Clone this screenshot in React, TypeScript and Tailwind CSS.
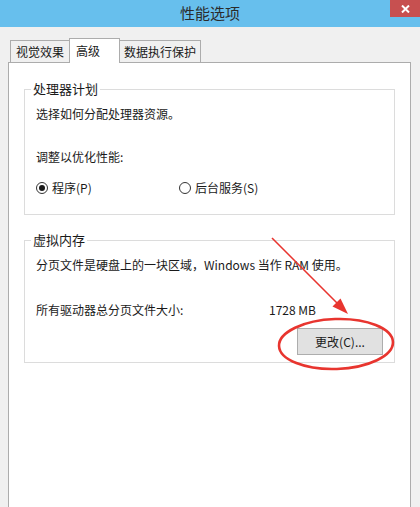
const font = "font-['Microsoft_YaHei','Noto_Sans_CJK_SC',sans-serif]";

function Radio({ checked, label, className }: { checked?: boolean; label: string; className?: string }) {
  return (
    <label className={`flex items-center gap-[4px] ${className ?? ""}`}>
      <span className="w-[12px] h-[12px] rounded-full border border-[#333] bg-white flex items-center justify-center">
        {checked && <span className="w-[6px] h-[6px] rounded-full bg-[#1a1a1a]" />}
      </span>
      <span>{label}</span>
    </label>
  );
}

function GroupBox({ title, children, className }: { title: string; children: React.ReactNode; className?: string }) {
  return (
    <fieldset className={`border border-[#dcdcdc] px-[11px] ${className ?? ""}`}>
      <legend className="-ml-[5px] px-[2px] text-[13px] leading-[16px]">{title}</legend>
      {children}
    </fieldset>
  );
}

export default function App() {
  const tabs = ["视觉效果", "高级", "数据执行保护"];

  return (
    <div className={`relative w-[420px] h-[507px] overflow-hidden bg-[#f0f0f0] text-[#1a1a1a] ${font}`}>
      {/* title bar */}
      <div className="grid grid-cols-[30px_1fr_30px] h-[27px] bg-[#67bfed]">
        <div />
        <div className="flex items-center justify-center text-[15px] text-[#2b2b2b]">性能选项</div>
        <div className="h-[17px] bg-[#c75050] flex items-center justify-center">
          <svg width="9" height="8" viewBox="0 0 9 8">
            <path d="M1 0.5 L8 7.5 M8 0.5 L1 7.5" stroke="#fff" strokeWidth="2" />
          </svg>
        </div>
      </div>

      <div className="pt-[10px] pl-[8px] pr-[9px]">
        {/* tabs */}
        <div className="flex items-end pl-[2px] text-[12px] h-[25px]">
          <div className="h-[22px] px-[5px] border border-b-0 border-[#acacac] bg-[#f0f0f0] flex items-center">{tabs[0]}</div>
          <div className="h-[25px] w-[51px] px-[6px] border border-b-0 border-[#acacac] bg-white -ml-px -mb-px relative z-10 flex items-start pt-[3px]">
            {tabs[1]}
          </div>
          <div className="h-[22px] px-[4px] border border-b-0 border-l-0 border-[#acacac] bg-[#f0f0f0] flex items-center">{tabs[2]}</div>
        </div>

        {/* panel */}
        <div className="h-[460px] border border-[#acacac] bg-white px-[15px] pt-[18px] text-[12px]">
          <GroupBox title="处理器计划" className="h-[134px]">
            <p className="mt-[9px] leading-[16px]">选择如何分配处理器资源。</p>
            <p className="mt-[27px] leading-[16px]">调整以优化性能:</p>
            <div className="mt-[15px] flex leading-[16px]">
              <Radio checked label="程序(P)" className="w-[143px]" />
              <Radio label="后台服务(S)" />
            </div>
          </GroupBox>

          <GroupBox title="虚拟内存" className="mt-[17px] h-[131px]">
            <p className="mt-[9px] leading-[16px]">分页文件是硬盘上的一块区域，Windows 当作 RAM 使用。</p>
            <div className="mt-[29px] flex leading-[16px]">
              <span className="w-[233px]">所有驱动器总分页文件大小:</span>
              <span>1728 MB</span>
            </div>
            <div className="flex justify-end mt-[10px]">
              <button className="w-[86px] h-[27px] border border-[#adadad] bg-[#e1e1e1] text-[12px]">更改(C)...</button>
            </div>
          </GroupBox>
        </div>
      </div>

      {/* red annotation drawn on top */}
      <svg className="absolute inset-0 pointer-events-none" width="420" height="507" viewBox="0 0 420 507">
        <line x1="272" y1="238" x2="339" y2="305" stroke="#e8352f" strokeWidth="1.6" />
        <polygon points="348,314 332.5,306.5 340.5,298.5" fill="#e8352f" />
        <ellipse cx="336" cy="344" rx="57" ry="25" fill="none" stroke="#e8352f" strokeWidth="2.6" transform="rotate(-2 336 344)" />
      </svg>
    </div>
  );
}
